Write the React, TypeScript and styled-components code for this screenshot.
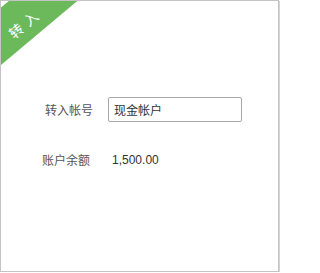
import React from "react";
import styled, { createGlobalStyle } from "styled-components";

const Global = createGlobalStyle`
  body {
    margin: 0;
    background: #fff;
    font-family: "Liberation Sans", "Noto Sans CJK SC", sans-serif;
  }
`;

const Card = styled.div`
  position: relative;
  box-sizing: border-box;
  width: 279px;
  height: 272px;
  border: 1px solid #c4c4c4;
  box-shadow: 1px 1px 0 #d4d4d4;
  background: #fff;
  overflow: hidden;
`;

const Ribbon = styled.div`
  position: absolute;
  left: -63px;
  top: -1px;
  width: 160px;
  height: 44px;
  background: #6cb95c;
  transform: rotate(-40deg);
  color: #fff;
  font-size: 14px;
  letter-spacing: 5px;
  display: flex;
  align-items: center;
  justify-content: center;
  padding: 10px 0 0 10px;
  box-sizing: border-box;
`;

const Form = styled.div`
  display: flex;
  flex-direction: column;
  gap: 25px;
  padding-top: 96px;
`;

const Row = styled.div<{ $indent: number; $gap: number }>`
  display: flex;
  align-items: center;
  height: 25px;
  padding-left: ${(p) => p.$indent}px;
  gap: ${(p) => p.$gap}px;
`;

const Label = styled.span`
  font-size: 12px;
  color: #555;
  white-space: nowrap;
`;

const Input = styled.input`
  box-sizing: border-box;
  width: 134px;
  height: 25px;
  border: 1px solid #a8a8a8;
  border-radius: 2px;
  padding: 0 5px;
  font-family: inherit;
  font-size: 12px;
  color: #333;
  outline: none;
`;

const Value = styled.span`
  font-size: 12px;
  color: #333;
`;

export default function App() {
  return (
    <>
      <Global />
      <Card>
        <Ribbon>转入</Ribbon>
        <Form>
          <Row $indent={44} $gap={15}>
            <Label>转入帐号</Label>
            <Input defaultValue="现金帐户" />
          </Row>
          <Row $indent={41} $gap={22}>
            <Label>账户余额</Label>
            <Value>1,500.00</Value>
          </Row>
        </Form>
      </Card>
    </>
  );
}
